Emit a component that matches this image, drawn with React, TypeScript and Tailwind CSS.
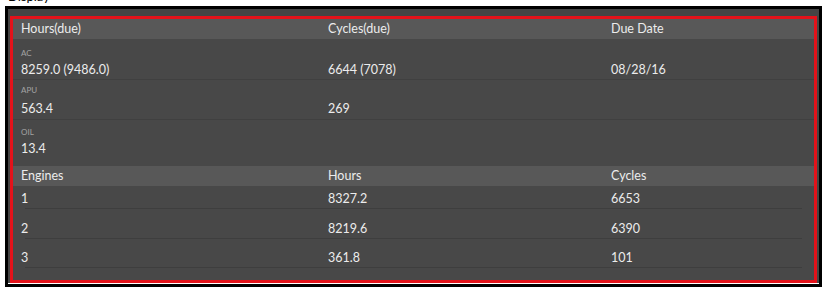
import React from "react";

const font = { fontFamily: "Lato, 'Open Sans', sans-serif" };

type Stat = { label: string; hours: string; cycles: string; due: string; h: string; pt: string; mt: string };

const stats: Stat[] = [
  { label: "AC", hours: "8259.0 (9486.0)", cycles: "6644 (7078)", due: "08/28/16", h: "h-[41px]", pt: "pt-[10px]", mt: "mt-[4px]" },
  { label: "APU", hours: "563.4", cycles: "269", due: "", h: "h-[40px]", pt: "pt-[6px]", mt: "mt-[6px]" },
  { label: "OIL", hours: "13.4", cycles: "", due: "", h: "h-[46px]", pt: "pt-[8px]", mt: "mt-[4px]" },
];

const engines = [
  { id: "1", hours: "8327.2", cycles: "6653", h: "h-[23px]" },
  { id: "2", hours: "8219.6", cycles: "6390", h: "h-[30px]" },
  { id: "3", hours: "361.8", cycles: "101", h: "h-[29px]" },
];

const cols = "grid grid-cols-[307px_283px_1fr]";

const HeaderRow = ({ a, b, c }: { a: string; b: string; c: string }) => (
  <div className={`${cols} h-[20px] items-center bg-[#585858] text-[12.5px] text-[#ececec]`}>
    <div className="pl-[8px]">{a}</div>
    <div className="pl-[8px]">{b}</div>
    <div className="pl-[8px]">{c}</div>
  </div>
);

export default function App() {
  return (
    <div className="w-[831px] h-[298px] bg-white overflow-hidden" style={font}>
      <div className="h-[5px] overflow-hidden pl-[8px]">
        <div className="-mt-[12px] text-[13px] leading-[16px] text-black">Display</div>
      </div>
      <div className="mt-[1px] ml-[5px] w-[817px] border-[3px] border-black bg-[#444444]">
        <div className="pt-[7px] px-[2px]">
          <div className="border-[3px] border-[#e3121a] bg-[#484848] h-[267px] overflow-hidden">
            <HeaderRow a="Hours(due)" b="Cycles(due)" c="Due Date" />
            {stats.map((s, i) => (
              <div
                key={s.label}
                className={`${s.h} ${s.pt} ${i < 2 ? "border-b border-[#404040]" : ""}`}
              >
                <div className="pl-[8px] text-[8px] leading-[9px] text-[#a3a3a3]">{s.label}</div>
                <div className={`${cols} ${s.mt} text-[12.5px] leading-[15px] text-[#ececec]`}>
                  <div className="pl-[8px]">{s.hours}</div>
                  <div className="pl-[8px]">{s.cycles}</div>
                  <div className="pl-[8px]">{s.due}</div>
                </div>
              </div>
            ))}
            <HeaderRow a="Engines" b="Hours" c="Cycles" />
            {engines.map((e) => (
              <div key={e.id} className="px-[12px]">
                <div className={`${e.h} flex items-end pb-[2px] border-b border-[#3e3e3e]`}>
                  <div className={`${cols} -ml-[12px] w-full text-[12.5px] leading-[15px] text-[#ececec]`}>
                    <div className="pl-[8px]">{e.id}</div>
                    <div className="pl-[8px]">{e.hours}</div>
                    <div className="pl-[8px]">{e.cycles}</div>
                  </div>
                </div>
              </div>
            ))}
          </div>
        </div>
        <div className="h-px bg-white" />
      </div>
    </div>
  );
}
